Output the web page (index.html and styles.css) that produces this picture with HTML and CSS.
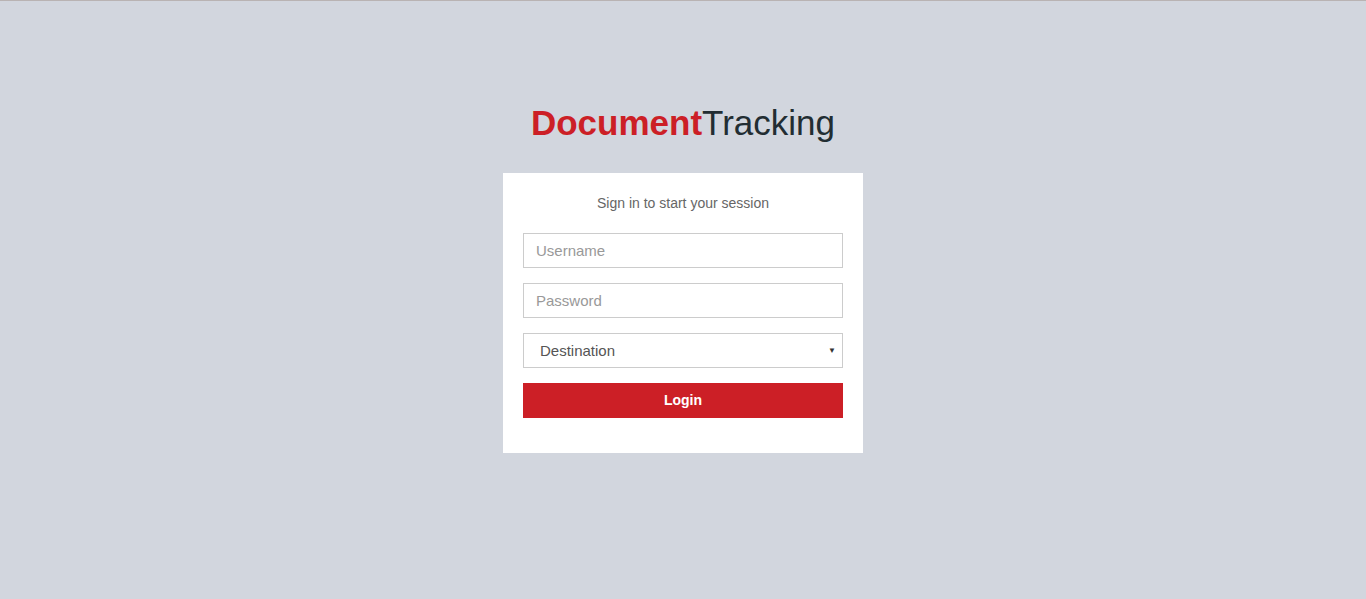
FILE: index.html
```html
<!DOCTYPE html>
<html>
<head>
<meta charset="utf-8">
<link rel="stylesheet" href="styles.css">
</head>
<body>
<div class="login-box">
  <div class="login-logo"><b>Document</b>Tracking</div>
  <div class="login-body">
    <p class="login-msg">Sign in to start your session</p>
    <div class="form-group"><input class="form-control" type="text" placeholder="Username"></div>
    <div class="form-group"><input class="form-control" type="password" placeholder="Password"></div>
    <div class="form-group select-wrap">
      <div class="form-control select">Destination</div>
      <span class="caret">&#9660;</span>
    </div>
    <button class="btn">Login</button>
  </div>
</div>
</body>
</html>
```
FILE: styles.css
```css
* { box-sizing: border-box; }
html, body { margin: 0; padding: 0; }
body {
  background: #d2d6de;
  border-top: 1px solid #b9b3b3;
  font-family: "Liberation Sans", Arial, sans-serif;
  font-size: 14px;
  line-height: 20px;
  color: #333;
  height: 599px;
  overflow: hidden;
}
.login-box {
  width: 360px;
  margin: 97px auto 0;
}
.login-logo {
  font-size: 35px;
  line-height: 50px;
  height: 50px;
  text-align: center;
  color: #222d32;
  margin-bottom: 25px;
}
.login-logo b { color: #cc1f26; }
.login-body {
  background: #fff;
  padding: 20px 20px 20px;
  height: 280px;
}
.login-msg {
  margin: 0;
  text-align: center;
  color: #666;
  font-size: 14px;
  padding: 0 20px 20px;
}
.form-group { margin-bottom: 15px; }
.form-control {
  display: block;
  width: 100%;
  height: 35px;
  padding: 6px 12px;
  font-family: "Liberation Sans", Arial, sans-serif;
  font-size: 15px;
  color: #555;
  background: #fff;
  border: 1px solid #ccc;
  border-radius: 0;
  outline: none;
}
.form-control::placeholder { color: #999; }
.select-wrap { position: relative; }
.select {
  padding: 7px 16px;
  font-size: 15px;
  line-height: 20px;
  color: #555;
}
.caret {
  position: absolute;
  right: 7px;
  top: 8px;
  font-size: 8px;
  color: #333;
}
.btn {
  display: block;
  width: 100%;
  height: 35px;
  background: #cc1f26;
  border: 0;
  color: #fff;
  font-family: "Liberation Sans", Arial, sans-serif;
  font-weight: bold;
  font-size: 14px;
  border-radius: 0;
  padding: 0 0 2px;
}
```
